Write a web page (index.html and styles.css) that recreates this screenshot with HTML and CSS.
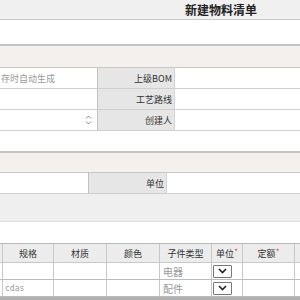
FILE: index.html
```html
<!DOCTYPE html>
<html lang="zh">
<head>
<meta charset="utf-8">
<link rel="stylesheet" href="styles.css">
</head>
<body>
<div class="page">
  <div class="titlebar"><span class="title">新建物料清单</span></div>
  <div class="blank top-blank"></div>
  <div class="band"></div>
  <div class="form-grid g1">
    <div class="cell input"><span class="ph">存时自动生成</span></div>
    <div class="cell label">上级BOM</div>
    <div class="cell input"></div>
    <div class="cell input"></div>
    <div class="cell label">工艺路线</div>
    <div class="cell input"></div>
    <div class="cell input spin-cell">
      <svg class="spin" width="7" height="12" viewBox="0 0 7 12"><path d="M1 4.5 L3.5 2 L6 4.5 M1 7.5 L3.5 10 L6 7.5" fill="none" stroke="#8a8a8a" stroke-width="1"/></svg>
    </div>
    <div class="cell label">创建人</div>
    <div class="cell input"></div>
  </div>
  <div class="blank mid-blank"></div>
  <div class="band band2"></div>
  <div class="form-grid g2">
    <div class="cell input"></div>
    <div class="cell label">单位</div>
    <div class="cell input"></div>
  </div>
  <div class="grayzone"></div>
  <div class="blank pre-table"></div>
  <div class="table">
    <div class="tr thead">
      <div class="td c0"></div>
      <div class="td c1">规格</div>
      <div class="td c2">材质</div>
      <div class="td c3">颜色</div>
      <div class="td c4">子件类型</div>
      <div class="td c5">单位<span class="req">*</span></div>
      <div class="td c6">定额<span class="req">*</span></div>
      <div class="td c7"></div>
    </div>
    <div class="tr row">
      <div class="td c0"></div>
      <div class="td c1"></div>
      <div class="td c2"></div>
      <div class="td c3"></div>
      <div class="td c4 type">电器</div>
      <div class="td c5 sel-cell"><span class="sel"><svg width="9" height="6" viewBox="0 0 9 6"><path d="M1 1 L4.5 4.5 L8 1" fill="none" stroke="#222" stroke-width="1.6"/></svg></span></div>
      <div class="td c6"></div>
      <div class="td c7"></div>
    </div>
    <div class="tr row">
      <div class="td c0"></div>
      <div class="td c1 code">cdas</div>
      <div class="td c2"></div>
      <div class="td c3"></div>
      <div class="td c4 type">配件</div>
      <div class="td c5 sel-cell"><span class="sel"><svg width="9" height="6" viewBox="0 0 9 6"><path d="M1 1 L4.5 4.5 L8 1" fill="none" stroke="#222" stroke-width="1.6"/></svg></span></div>
      <div class="td c6"></div>
      <div class="td c7"></div>
    </div>
  </div>
  <div class="bottombar"></div>
</div>
</body>
</html>
```

FILE: styles.css
```css
html, body {
  margin: 0;
  padding: 0;
  background: #fff;
}
body {
  font-family: "Noto Sans CJK SC", "Noto Sans", sans-serif;
  font-size: 9px;
  color: #333;
  width: 300px;
  height: 300px;
  overflow: hidden;
}
.page {
  display: flex;
  flex-direction: column;
}
.titlebar {
  height: 20px;
  background: #f0f0f0;
  border-bottom: 1px solid #c9c9c9;
  display: flex;
  align-items: center;
  padding-left: 185px;
  box-sizing: border-box;
}
.title {
  font-size: 12px;
  font-weight: bold;
  color: #222;
  line-height: 1;
  margin-top: 1px;
}
.top-blank {
  height: 24px;
  border-bottom: 2px solid #c4c4c4;
}
.band {
  height: 21px;
  background: #f4f0ee;
  border-bottom: 1px solid #c8c8c8;
}
.form-grid {
  display: grid;
  grid-auto-rows: 21px;
}
.g1 {
  grid-template-columns: 97px 78px 1fr;
}
.g2 {
  grid-template-columns: 88px 79px 1fr;
}
.cell {
  border-bottom: 1px solid #cfcfcf;
  display: flex;
  align-items: center;
  overflow: hidden;
  white-space: nowrap;
}
.input {
  background: #fff;
}
.label {
  background: #e6e6e6;
  border-left: 1px solid #c2c2c2;
  border-right: 1px solid #d4d4d4;
  justify-content: flex-end;
  padding-right: 2px;
  color: #333;
}
.ph {
  color: #9a9a9a;
  padding-left: 1px;
}
.spin-cell {
  justify-content: flex-end;
  padding-right: 5px;
}
.mid-blank {
  height: 20px;
}
.band2 {
  border-top: 2px solid #c4c4c4;
  height: 19px;
}
.grayzone {
  height: 27px;
  background: #efefef;
  border-bottom: 1px solid #e0e0e0;
}
.pre-table {
  height: 21px;
}
.table {
  display: flex;
  flex-direction: column;
  border-top: 1px solid #b8b8b8;
}
.tr {
  display: grid;
  grid-template-columns: 3px 51px 53px 53px 52px 31px 52px 5px;
}
.thead {
  height: 18px;
  background: #ececec;
  border-bottom: 1px solid #c8c8c8;
}
.row {
  height: 16px;
  border-bottom: 1px solid #bcbcbc;
}
.td {
  border-right: 1px solid #c8c8c8;
  display: flex;
  align-items: center;
  justify-content: center;
  overflow: hidden;
  white-space: nowrap;
}
.c7 {
  border-right: none;
}
.req {
  color: #e0404a;
  font-size: 8px;
  align-self: flex-start;
  margin-top: 2px;
}
.type {
  justify-content: flex-start;
  padding-left: 3px;
  color: #999;
  font-size: 10px;
}
.code {
  justify-content: flex-start;
  padding-left: 2px;
  color: #999;
  font-family: "DejaVu Sans Mono", monospace;
  font-size: 8px;
}
.sel-cell {
  justify-content: flex-start;
}
.sel {
  width: 19px;
  height: 13px;
  border: 1px solid #777;
  border-radius: 1px;
  background: #fff;
  display: flex;
  align-items: center;
  justify-content: center;
  box-sizing: border-box;
  margin-left: 1px;
}
.bottombar {
  height: 6px;
  background: #b0b0b0;
}
```
